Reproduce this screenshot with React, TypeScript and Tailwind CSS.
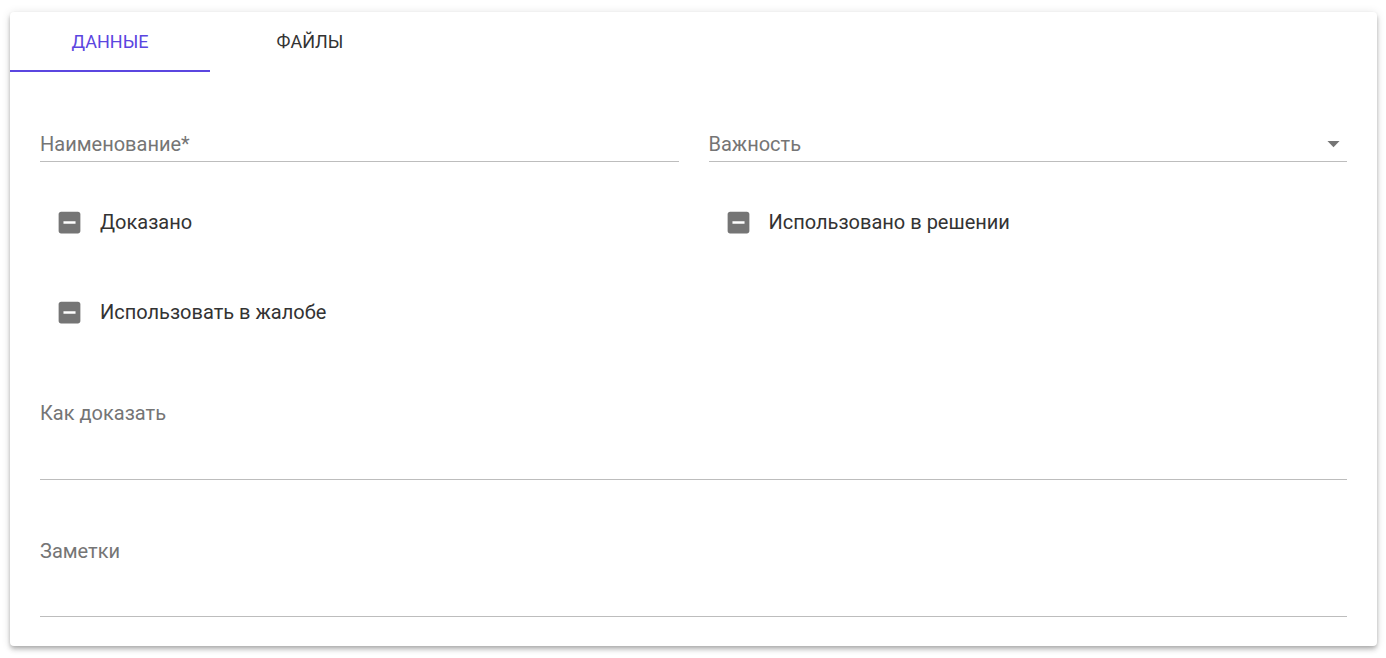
import React from "react";

function IndeterminateBox() {
  return (
    <svg width="29" height="29" viewBox="0 0 24 24" className="shrink-0">
      <path
        fill="#757575"
        d="M19 3H5c-1.1 0-2 .9-2 2v14c0 1.1.9 2 2 2h14c1.1 0 2-.9 2-2V5c0-1.1-.9-2-2-2zm-2 10H7v-2h10v2z"
      />
    </svg>
  );
}

function CheckRow({ label }: { label: string }) {
  return (
    <div className="flex items-center h-[42px] pl-[15px]">
      <IndeterminateBox />
      <span className="ml-[16px] text-[20px] text-[#333333]">{label}</span>
    </div>
  );
}

export default function App() {
  return (
    <div
      className="min-h-[658px] bg-white pt-[12px] px-[10px]"
      style={{ fontFamily: "Roboto, 'Noto Sans', sans-serif" }}
    >
      <div className="w-[1367px] h-[634px] bg-white rounded-[4px] shadow-[0_2px_4px_-1px_rgba(0,0,0,0.2),0_4px_5px_0_rgba(0,0,0,0.14),0_1px_10px_0_rgba(0,0,0,0.12)] flex flex-col">
        <div className="flex h-[60px]">
          <div className="w-[200px] flex items-center justify-center text-[18px] font-normal text-[#5b46e0] border-b-2 border-[#5b46e0] uppercase">
            Данные
          </div>
          <div className="w-[200px] flex items-center justify-center text-[18px] font-normal text-[#333333] uppercase pb-[2px]">
            Файлы
          </div>
        </div>
        <div className="px-[30px] pt-[56px] flex flex-col">
          <div className="grid grid-cols-2 gap-x-[30px]">
            <div className="border-b border-[#bdbdbd] h-[34px] flex items-center pb-[2px]">
              <span className="text-[20px] text-[#757575]">Наименование*</span>
            </div>
            <div className="border-b border-[#bdbdbd] h-[34px] flex items-center justify-between pb-[2px]">
              <span className="text-[20px] text-[#757575]">Важность</span>
              <svg width="29" height="29" viewBox="0 0 24 24" className="-mr-[1px]">
                <path d="M7 10l5 5 5-5z" fill="#757575" />
              </svg>
            </div>
          </div>
          <div className="grid grid-cols-2 gap-x-[30px] mt-[39px]">
            <div className="flex flex-col gap-[48px]">
              <CheckRow label="Доказано" />
              <CheckRow label="Использовать в жалобе" />
            </div>
            <div className="flex flex-col">
              <CheckRow label="Использовано в решении" />
            </div>
          </div>
          <div className="mt-[65px] border-b border-[#bdbdbd] h-[82px]">
            <div className="text-[20px] text-[#757575] leading-[30px]">Как доказать</div>
          </div>
          <div className="mt-[56px] border-b border-[#bdbdbd] h-[81px]">
            <div className="text-[20px] text-[#757575] leading-[30px]">Заметки</div>
          </div>
        </div>
      </div>
    </div>
  );
}
